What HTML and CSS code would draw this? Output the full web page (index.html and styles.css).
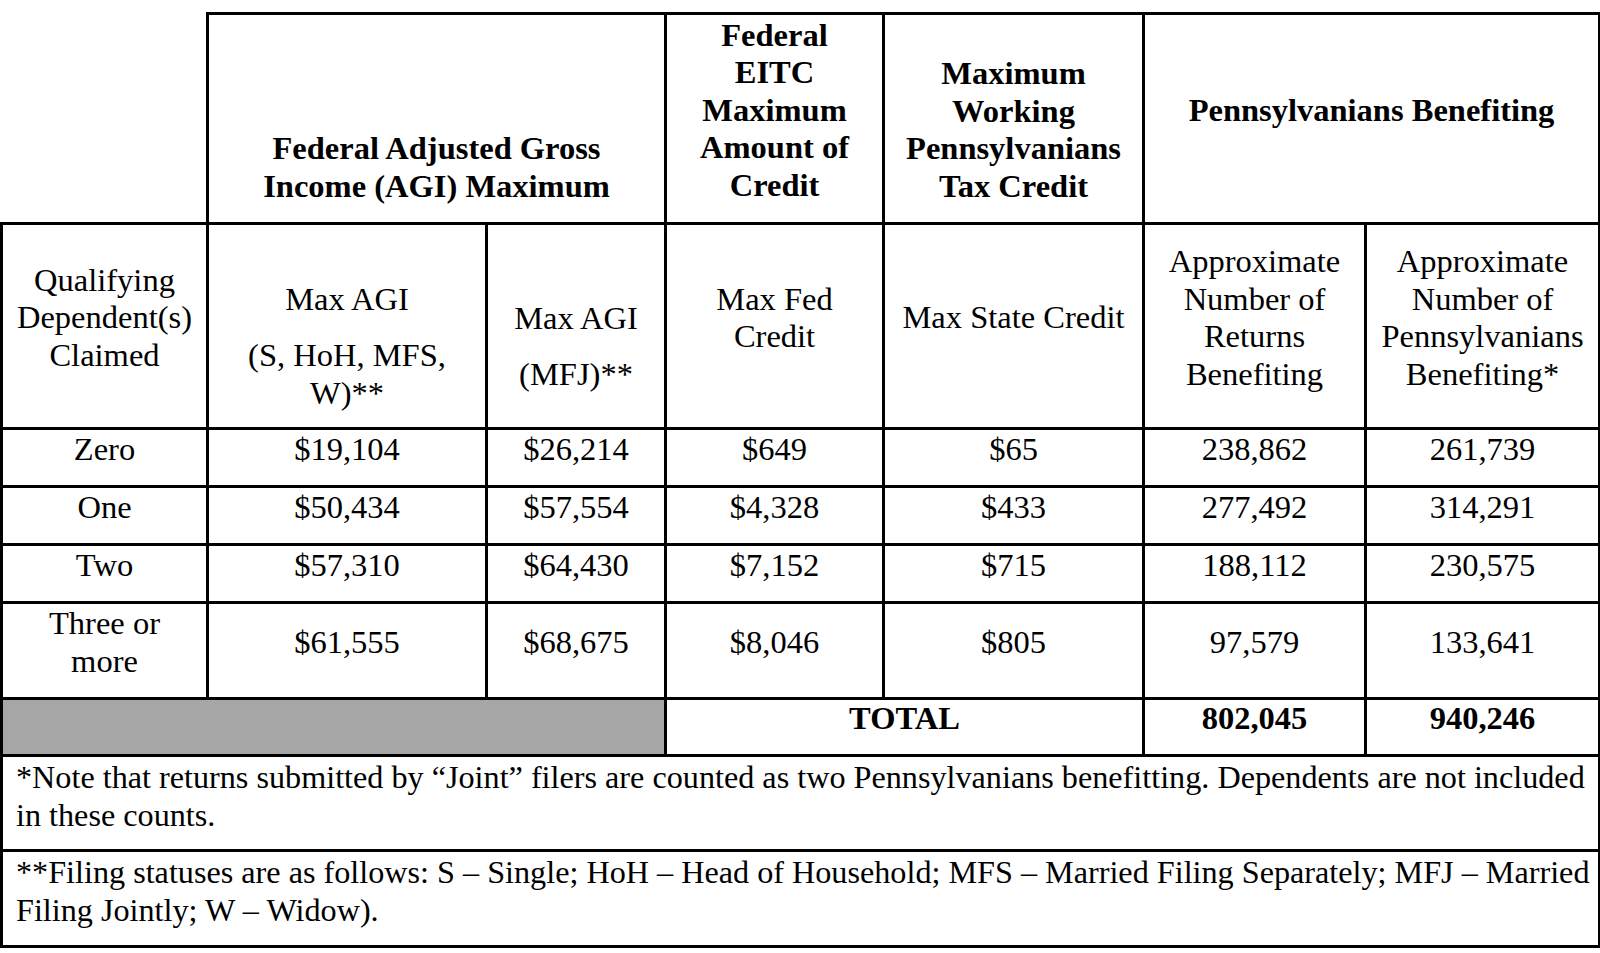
FILE: index.html
```html
<!DOCTYPE html>
<html lang="en">
<head>
<meta charset="utf-8">
<title>Working Pennsylvanians Tax Credit</title>
<link rel="stylesheet" href="styles.css">
</head>
<body>
<div class="page">
<table class="eitc">
  <colgroup>
    <col class="c1"><col class="c2"><col class="c3"><col class="c4"><col class="c5"><col class="c6"><col class="c7">
  </colgroup>
  <tr class="h1">
    <td class="corner"></td>
    <th colspan="2" class="bottom">Federal Adjusted Gross<br>Income (AGI) Maximum</th>
    <th>Federal<br>EITC<br>Maximum<br>Amount of<br>Credit</th>
    <th class="bottom">Maximum<br>Working<br>Pennsylvanians<br>Tax Credit</th>
    <th colspan="2">Pennsylvanians Benefiting</th>
  </tr>
  <tr class="h2">
    <td>Qualifying<br>Dependent(s)<br>Claimed</td>
    <td class="agi agi-s"><div class="para">Max AGI</div><div>(S, HoH, MFS,<br>W)**</div></td>
    <td class="agi agi-j"><div class="para">Max AGI</div><div>(MFJ)**</div></td>
    <td>Max Fed<br>Credit</td>
    <td>Max State Credit</td>
    <td>Approximate<br>Number of<br>Returns<br>Benefiting</td>
    <td>Approximate<br>Number of<br>Pennsylvanians<br>Benefiting*</td>
  </tr>
  <tr class="row">
    <td>Zero</td><td>$19,104</td><td>$26,214</td><td>$649</td><td>$65</td><td>238,862</td><td>261,739</td>
  </tr>
  <tr class="row">
    <td>One</td><td>$50,434</td><td>$57,554</td><td>$4,328</td><td>$433</td><td>277,492</td><td>314,291</td>
  </tr>
  <tr class="row">
    <td>Two</td><td>$57,310</td><td>$64,430</td><td>$7,152</td><td>$715</td><td>188,112</td><td>230,575</td>
  </tr>
  <tr class="row-tall">
    <td>Three or<br>more</td><td>$61,555</td><td>$68,675</td><td>$8,046</td><td>$805</td><td>97,579</td><td>133,641</td>
  </tr>
  <tr class="total">
    <td colspan="3" class="shade"></td>
    <th colspan="2">TOTAL</th>
    <th>802,045</th>
    <th>940,246</th>
  </tr>
  <tr class="note1">
    <td colspan="7" class="note">*Note that returns submitted by “Joint” filers are counted as two Pennsylvanians benefitting. Dependents are not included<br>in these counts.</td>
  </tr>
  <tr class="note2">
    <td colspan="7" class="note">**Filing statuses are as follows: S – Single; HoH – Head of Household; MFS – Married Filing Separately; MFJ – Married<br>Filing Jointly; W – Widow).</td>
  </tr>
</table>
</div>
</body>
</html>
```
FILE: styles.css
```css
html, body {
  margin: 0;
  padding: 0;
  background: #ffffff;
}

.page {
  padding-top: 12px;
}

.eitc {
  border-collapse: collapse;
  table-layout: fixed;
  width: 1598px;
  font-family: "Liberation Serif", "Times New Roman", serif;
  font-size: 32.5px;
  line-height: 37.5px;
  color: #000;
}

.c1 { width: 206px; }
.c2 { width: 279px; }
.c3 { width: 179px; }
.c4 { width: 218px; }
.c5 { width: 260px; }
.c6 { width: 222px; }
.c7 { width: 234px; }

.eitc td,
.eitc th {
  border: 3px solid #000;
  padding: 0 2px 16px;
  text-align: center;
  vertical-align: middle;
  font-weight: normal;
  white-space: nowrap;
  overflow: hidden;
}

.eitc th {
  font-weight: bold;
}

.eitc td.corner {
  border-top: none;
  border-left: none;
}

.eitc th.bottom {
  vertical-align: bottom;
  padding-bottom: 17px;
}

.h1 { height: 210px; }
.h2 { height: 205px; }
.row { height: 58px; }
.row-tall { height: 96px; }
.total { height: 57px; }
.note1 { height: 95px; }
.note2 { height: 96px; }

.eitc td.agi {
  vertical-align: top;
  padding-bottom: 0;
}

.eitc td.agi-s { padding-top: 56px; }
.eitc td.agi-j { padding-top: 75px; }

.para {
  margin-bottom: 18.5px;
}

.eitc td.shade {
  background: #a6a6a6;
}

.eitc td.note {
  text-align: left;
  vertical-align: top;
  padding: 2px 4px 0 13px;
  font-size: 32.2px;
}
```
